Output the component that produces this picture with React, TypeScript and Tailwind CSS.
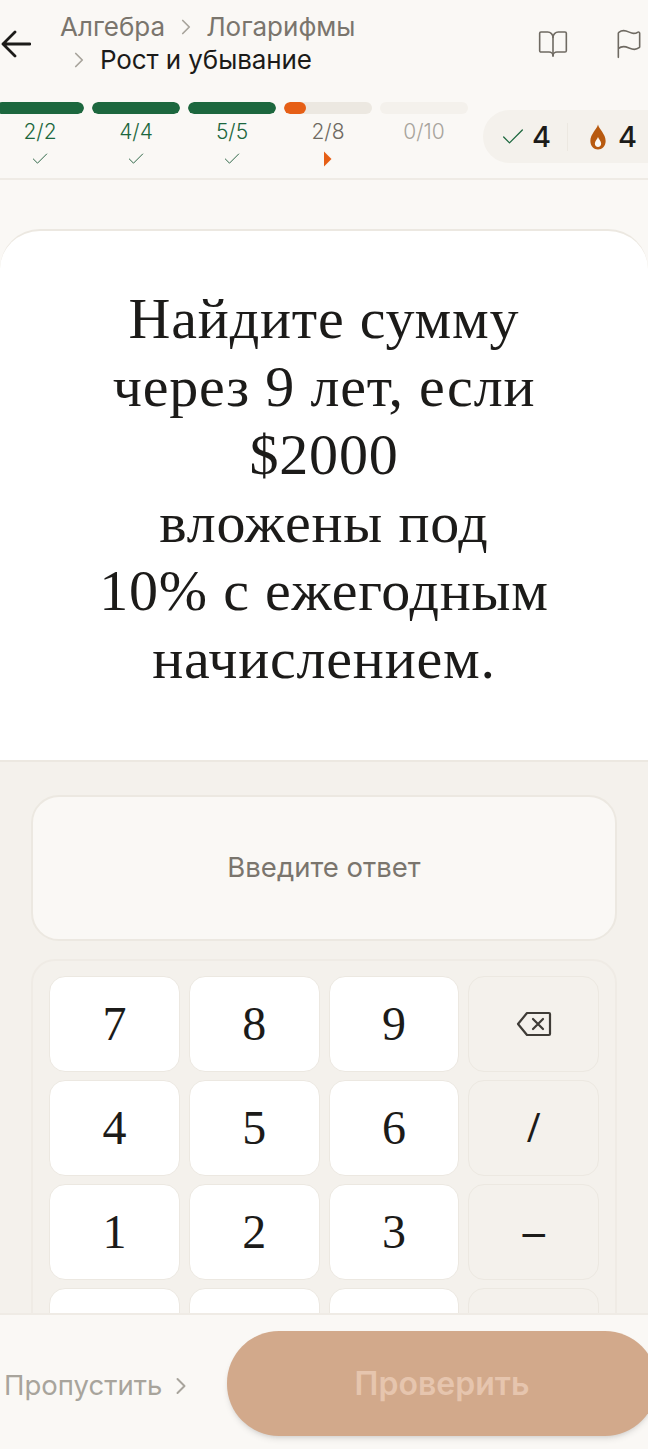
import { BookOpen, Check, ChevronRight, Flag } from "lucide-react";

const sans = "font-['Inter','Noto_Sans',sans-serif]";
const serif = "font-['Liberation_Serif',serif]";

const sections = [
  { label: "2/2", fill: "w-full", state: "done" },
  { label: "4/4", fill: "w-full", state: "done" },
  { label: "5/5", fill: "w-full", state: "done" },
  { label: "2/8", fill: "w-1/4", state: "current" },
  { label: "0/10", fill: "w-0", state: "todo" },
];

// last row sits under the footer, only the tops of the keys are visible
const keys = ["7", "8", "9", "back", "4", "5", "6", "/", "1", "2", "3", "–", "", "", "", "blank"];
const sideKeys = ["back", "/", "–", "blank"];

function BackspaceIcon() {
  return (
    <svg width="36" height="28" viewBox="0 0 36 28" fill="none" stroke="#3f3c37" strokeWidth="2.2" strokeLinejoin="round" strokeLinecap="round">
      <path d="M11 3 H33 a1 1 0 0 1 1 1 V24 a1 1 0 0 1 -1 1 H11 L2 14 Z" />
      <path d="M17 9 L27 19 M27 9 L17 19" />
    </svg>
  );
}

function Progress() {
  return (
    <div className="-ml-1 flex gap-2">
      {sections.map((s) => (
        <div key={s.label} className="flex w-[88px] flex-col items-center">
          <div className={`h-3 w-full overflow-hidden rounded-full ${s.state === "todo" ? "bg-[#f4f1ec]" : "bg-[#ece8e1]"}`}>
            <div className={`h-full rounded-full ${s.fill} ${s.state === "current" ? "bg-[#e65f16]" : "bg-[#1c673e]"}`} />
          </div>
          <span
            className={`mt-[5px] text-[21px] leading-[26px] font-light ${
              s.state === "done" ? "text-[#1c673e]" : s.state === "current" ? "text-[#6f6a62]" : "text-[#a8a49c]"
            }`}
          >
            {s.label}
          </span>
          <div className="flex h-[28px] items-center justify-center">
            {s.state === "done" && <Check size={20} strokeWidth={1.1} className="text-[#1c5a38]" />}
            {s.state === "current" && (
              <svg width="10" height="16" viewBox="0 0 10 16">
                <path d="M1 0.5 L8.5 8 L1 15.5 Z" fill="#e65f16" />
              </svg>
            )}
          </div>
        </div>
      ))}
    </div>
  );
}

function Key({ value }: { value: string }) {
  const side = sideKeys.includes(value);
  return (
    <div
      className={`flex h-[96px] items-center justify-center rounded-2xl border border-[#ece8e1] text-[#1c1b19] ${serif} text-[48px] ${
        side ? "bg-[#f4f1ec]" : "bg-white"
      }`}
    >
      {value === "back" ? <BackspaceIcon /> : value === "blank" ? null : side ? <span className="text-[44px] font-bold">{value}</span> : value}
    </div>
  );
}

export default function App() {
  return (
    <div className={`flex h-[1449px] w-[648px] flex-col overflow-hidden bg-[#faf8f5] ${sans}`}>
      <header className="h-[180px] shrink-0 border-b-2 border-[#efebe5]">
        <div className="flex h-[102px] items-start">
          <svg width="30" height="28" viewBox="0 0 30 28" fill="none" stroke="#1c1b19" strokeWidth="2.8" strokeLinecap="round" strokeLinejoin="round" className="mt-[30px] ml-[1px] shrink-0">
            <path d="M14 2 L2 14 L14 26 M2 14 H29" />
          </svg>
          <div className="mt-[10px] ml-[29px] w-[320px] text-[26px] leading-[33px] text-[#7a756d]">
            <div className="flex items-center">
              Алгебра
              <ChevronRight size={26} strokeWidth={1.6} className="mr-[7px] ml-[8px] text-[#a8a49c]" />
              Логарифмы
            </div>
            <div className="flex items-center pl-[6px] tracking-[-0.1px] text-[#1c1b19]">
              <ChevronRight size={26} strokeWidth={1.6} className="mr-[8px] text-[#a8a49c]" />
              Рост и убывание
            </div>
          </div>
          <div className="mr-[3px] ml-auto flex items-center gap-[44px] pt-[28px]">
            <BookOpen size={32} strokeWidth={1.2} className="text-[#6f6a62]" />
            <Flag size={32} strokeWidth={1.2} className="text-[#6f6a62]" />
          </div>
        </div>
        <div className="flex items-start">
          <Progress />
          <div className="mt-[8px] ml-[15px] flex h-[53px] w-[190px] shrink-0 items-center rounded-full bg-[#f4f1ec] pl-[16px]">
            <Check size={28} strokeWidth={1.1} className="text-[#1c673e]" />
            <span className="ml-[5px] text-[29px] font-medium text-[#1c1b19]">4</span>
            <div className="mr-[21px] ml-[16px] h-[28px] w-px bg-[#ece8e1]" />
            <svg width="18" height="26" viewBox="0 0 20 26" preserveAspectRatio="none">
              <path d="M10 0.5 C11 5 18.5 10 18.5 17 C18.5 22 14.5 25.5 10 25.5 C5.5 25.5 1.5 22 1.5 17 C1.5 10 9 5 10 0.5 Z" fill="#b85a10" />
              <path d="M10 13 C10.5 15 13.5 17 13.5 19.5 C13.5 21.5 12 23 10 23 C8 23 6.5 21.5 6.5 19.5 C6.5 17 9.5 15 10 13 Z" fill="#faf8f5" />
            </svg>
            <span className="ml-[11px] text-[29px] font-medium text-[#1c1b19]">4</span>
          </div>
        </div>
      </header>

      <div className="flex-1 overflow-hidden bg-[#f4f1ec]">
        <div className="bg-[#faf8f5] pt-[49px]">
          <section className={`h-[533px] rounded-t-[40px] border-t-2 border-b-2 border-[#ece8e1] bg-white pt-[54px] text-center text-[58px] leading-[68px] tracking-[0.8px] text-[#1c1b19] ${serif}`}>
            <p>Найдите сумму</p>
            <p>через 9 лет, если</p>
            <p>$2000</p>
            <p>вложены под</p>
            <p>10% с ежегодным</p>
            <p>начислением.</p>
          </section>
        </div>

        <div className="px-[31px] pt-[33px]">
          <div className="flex h-[146px] items-center justify-center rounded-[28px] border-2 border-[#ece8e1] bg-[#faf8f5] text-[27.5px] text-[#7a756d]">
            Введите ответ
          </div>
          <div className="mt-[18px] grid grid-cols-4 gap-x-[9px] gap-y-[8px] rounded-[24px] border-2 border-[#efebe5] px-[16px] pt-[15px] pb-[16px]">
            {keys.map((k, i) => (
              <Key key={i} value={k} />
            ))}
          </div>
        </div>
      </div>

      <footer className="flex h-[136px] shrink-0 items-start border-t-2 border-[#efebe5] bg-[#faf8f5] pt-[16px]">
        <div className="mt-[34px] ml-[4px] flex w-[223px] shrink-0 items-center text-[27.5px] text-[#a8a49c]">
          Пропустить
          <ChevronRight size={28} strokeWidth={1.7} className="ml-[5px]" />
        </div>
        <div className="flex h-[105px] w-[430px] shrink-0 items-center justify-center rounded-[52px] bg-[#d2a98b] text-[32px] font-semibold text-[#e6c5ae] shadow-md">
          Проверить
        </div>
      </footer>
    </div>
  );
}
